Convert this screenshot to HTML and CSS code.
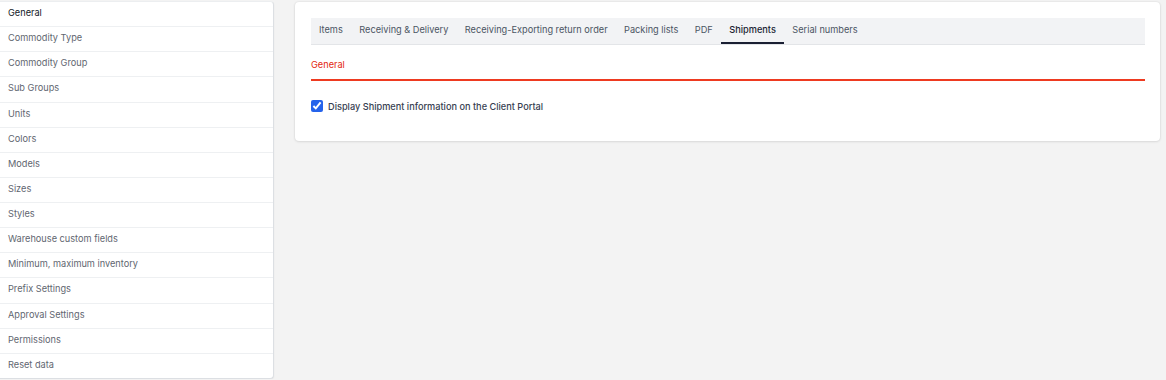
FILE: index.html
```html
<!DOCTYPE html>
<html lang="en">
<head>
    <meta charset="UTF-8">
    <meta name="viewport" content="width=device-width, initial-scale=1.0">
    <title>Warehouse Settings</title>
    <link rel="stylesheet" href="styles.css">
</head>
<body>
    <div class="page">
        <!-- Settings menu -->
        <ul class="side-menu">
            <li class="active">General</li>
            <li>Commodity Type</li>
            <li>Commodity Group</li>
            <li>Sub Groups</li>
            <li>Units</li>
            <li>Colors</li>
            <li>Models</li>
            <li>Sizes</li>
            <li>Styles</li>
            <li>Warehouse custom fields</li>
            <li>Minimum, maximum inventory</li>
            <li>Prefix Settings</li>
            <li>Approval Settings</li>
            <li>Permissions</li>
            <li>Reset data</li>
        </ul>

        <div class="content">
            <div class="card">
                <ul class="tabs">
                    <li>Items</li>
                    <li>Receiving &amp; Delivery</li>
                    <li>Receiving-Exporting return order</li>
                    <li>Packing lists</li>
                    <li>PDF</li>
                    <li class="active">Shipments</li>
                    <li>Serial numbers</li>
                </ul>

                <div class="section-title">General</div>
                <div class="section-line"></div>

                <label class="check-row">
                    <input type="checkbox" checked>
                    <span>Display Shipment information on the Client Portal</span>
                </label>
            </div>
        </div>
    </div>
</body>
</html>
```

FILE: styles.css
```css
body {
    font-family: Inter, "Noto Sans", sans-serif;
    font-size: 9.2px;
    margin: 0;
    padding: 0;
    background: #f3f3f3;
    color: #374151;
}

.page {
    display: flex;
    align-items: flex-start;
    padding-top: 1px;
}

/* Left settings menu */
.side-menu {
    list-style: none;
    margin: 0 0 0 -1px;
    padding: 0;
    width: 273px;
    background: #fff;
    border: 1px solid #dcdfe3;
    border-top-color: #eceef0;
    border-radius: 0 4px 4px 0;
    box-shadow: 0 1px 2px rgba(0, 0, 0, 0.06);
}

.side-menu li {
    height: 24.14px;
    line-height: 22px;
    padding: 0 8px;
    color: #5f6670;
    border-top: 1px solid #eef0f2;
}

.side-menu li:first-child {
    border-top: none;
}

.side-menu li.active {
    color: #111827;
}

.content {
    flex: 1;
    padding: 1px 6px 0 21px;
}

.card {
    background: #fff;
    border-radius: 4px;
    box-shadow: 0 0 2px rgba(0, 0, 0, 0.12), 0 1px 3px rgba(0, 0, 0, 0.08);
    padding: 16px 15px 29px 16px;
}

/* Tabs */
.tabs {
    list-style: none;
    margin: 0;
    padding: 0;
    display: flex;
    background: #f2f3f5;
    border-bottom: 1px solid #e3e5e8;
    height: 26px;
}

.tabs li {
    padding: 0 8px;
    line-height: 24px;
    color: #4b5563;
    border-bottom: 2px solid transparent;
}

.tabs li + li {
    margin-left: 0.5px;
}

.tabs li.active {
    color: #1a1f33;
    font-weight: 500;
    border-bottom-color: #1a1f33;
}

.section-title {
    line-height: 12px;
    color: #e3260f;
    padding: 14px 0 8px;
}

.section-line {
    height: 2px;
    background: #ee3a20;
}

.check-row {
    display: flex;
    align-items: center;
    gap: 5px;
    margin-top: 19px;
    font-weight: 500;
    color: #374151;
}

.check-row input {
    margin: 0;
    width: 12px;
    height: 12px;
    accent-color: #2563eb;
}
```
